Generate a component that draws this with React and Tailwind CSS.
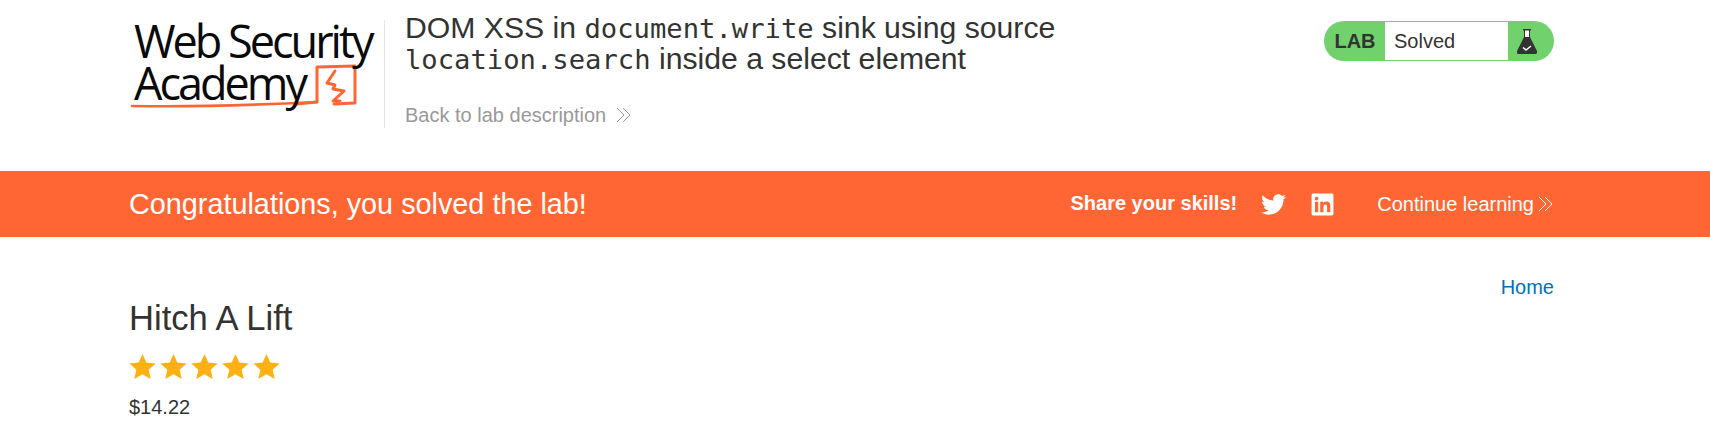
import React from "react";
import { FaTwitter, FaLinkedin } from "react-icons/fa";

function Chevrons({ className }) {
  return (
    <svg viewBox="0 0 16 16" className={className} fill="none" stroke="currentColor" strokeWidth="1">
      <path d="M1 1l7 7-7 7M7 1l7 7-7 7" />
    </svg>
  );
}

function Star() {
  return (
    <svg viewBox="0 0 24 24" className="w-[27px] h-[27px] shrink-0" fill="#ffb012">
      <path d="M12 .8l3.4 7.6 8.3.9-6.2 5.6 1.8 8.2L12 18.9l-7.3 4.2 1.8-8.2L.3 9.3l8.3-.9z" />
    </svg>
  );
}

function Flask() {
  return (
    <svg viewBox="0 0 20 25" className="w-[20px] h-[25px]">
      <path d="M6 0h8v1.5h-1V8l7 14a2 2 0 0 1-2 3H2a2 2 0 0 1-2-3L7 8V1.5H6z" fill="#333332" />
      <path d="M8 1.5h4V8H8z" fill="#fff" />
      <path d="M6 18.5l3 2.5 5-4" fill="none" stroke="#fff" strokeWidth="1.5" />
    </svg>
  );
}

function LogoMark() {
  return (
    <svg viewBox="0 0 255 60" className="absolute left-0 top-[40px] w-[255px] h-[60px]" fill="none" stroke="#ff6633" strokeLinecap="round" strokeLinejoin="round">
      <path d="M3 46c60 1 125-1 185-4" strokeWidth="2.6" />
      <path d="M168 44l20-2 0-35 38-1 0 37-21 1" strokeWidth="3" />
      <path d="M206 11l-8 12 8 2-2 4 11 2-11 10 7 0" strokeWidth="3" />
    </svg>
  );
}

export default function App() {
  return (
    <div className="bg-white text-[#333332] font-['Liberation_Sans',Arial,sans-serif] h-[424px] overflow-hidden">
      <header className="h-[171px] pl-[129px] pr-[156px] flex items-start">
        <div className="flex pt-[20px]">
          <div className="relative w-[255px] h-[108px] text-[#0a0a0a] font-['Open_Sans',sans-serif] font-medium text-[45px] leading-[42px] tracking-[-3px] pl-[5px]">
            <LogoMark />
            <div className="relative">Web Security</div>
            <div className="relative">Academy</div>
          </div>
          <div className="w-px h-[108px] bg-[#e6e6e6]"></div>
        </div>
        <div className="ml-[20px] pt-[13px] w-[700px]">
          <h2 className="text-[30.2px] leading-[30px]">
            DOM XSS in <span className="font-['DejaVu_Sans_Mono',monospace] text-[27.2px]">document.write</span> sink using source{" "}
            <span className="font-['DejaVu_Sans_Mono',monospace] text-[27.2px]">location.search</span> inside a select element
          </h2>
          <a className="mt-[29px] flex items-center text-[20px] leading-[22px] text-[#999]">
            Back to lab description
            <Chevrons className="w-[16px] h-[16px] ml-[10px]" />
          </a>
        </div>
        <div className="ml-auto mt-[21px] h-[40px] w-[230px] rounded-[20px] bg-[#70d16d] flex items-center overflow-hidden p-[1px]">
          <span className="w-[60px] text-center font-bold text-[20px]">LAB</span>
          <span className="h-full w-[123px] bg-white flex items-center pl-[9px] text-[20px]">Solved</span>
          <span className="flex-1 flex justify-center pr-[8px]"><Flask /></span>
        </div>
      </header>
      <section className="h-[66px] bg-[#ff6633] text-white pl-[129px] pr-[156px] flex items-center">
        <h4 className="text-[28.8px] leading-[32px]">Congratulations, you solved the lab!</h4>
        <div className="ml-auto flex items-center">
          <span className="font-bold text-[20px] mr-[24px] mb-[3px]">Share your skills!</span>
          <FaTwitter className="w-[25px] h-[25px] mr-[24px]" />
          <FaLinkedin className="w-[25px] h-[25px] mr-[42px]" />
          <span className="text-[20px]">Continue learning</span>
          <Chevrons className="w-[16px] h-[16px] ml-[4px]" />
        </div>
      </section>
      <main className="pl-[129px] pr-[156px] pt-[38px]">
        <div className="flex justify-end text-[20px] leading-[24px] text-[#0071bc]"><a>Home</a></div>
        <h3 className="text-[34.6px] leading-[38px]">Hitch A Lift</h3>
        <div className="flex gap-[4px] mt-[16px]">
          <Star /><Star /><Star /><Star /><Star />
        </div>
        <div className="text-[20px] leading-[24px] mt-[15px]">$14.22</div>
      </main>
    </div>
  );
}
